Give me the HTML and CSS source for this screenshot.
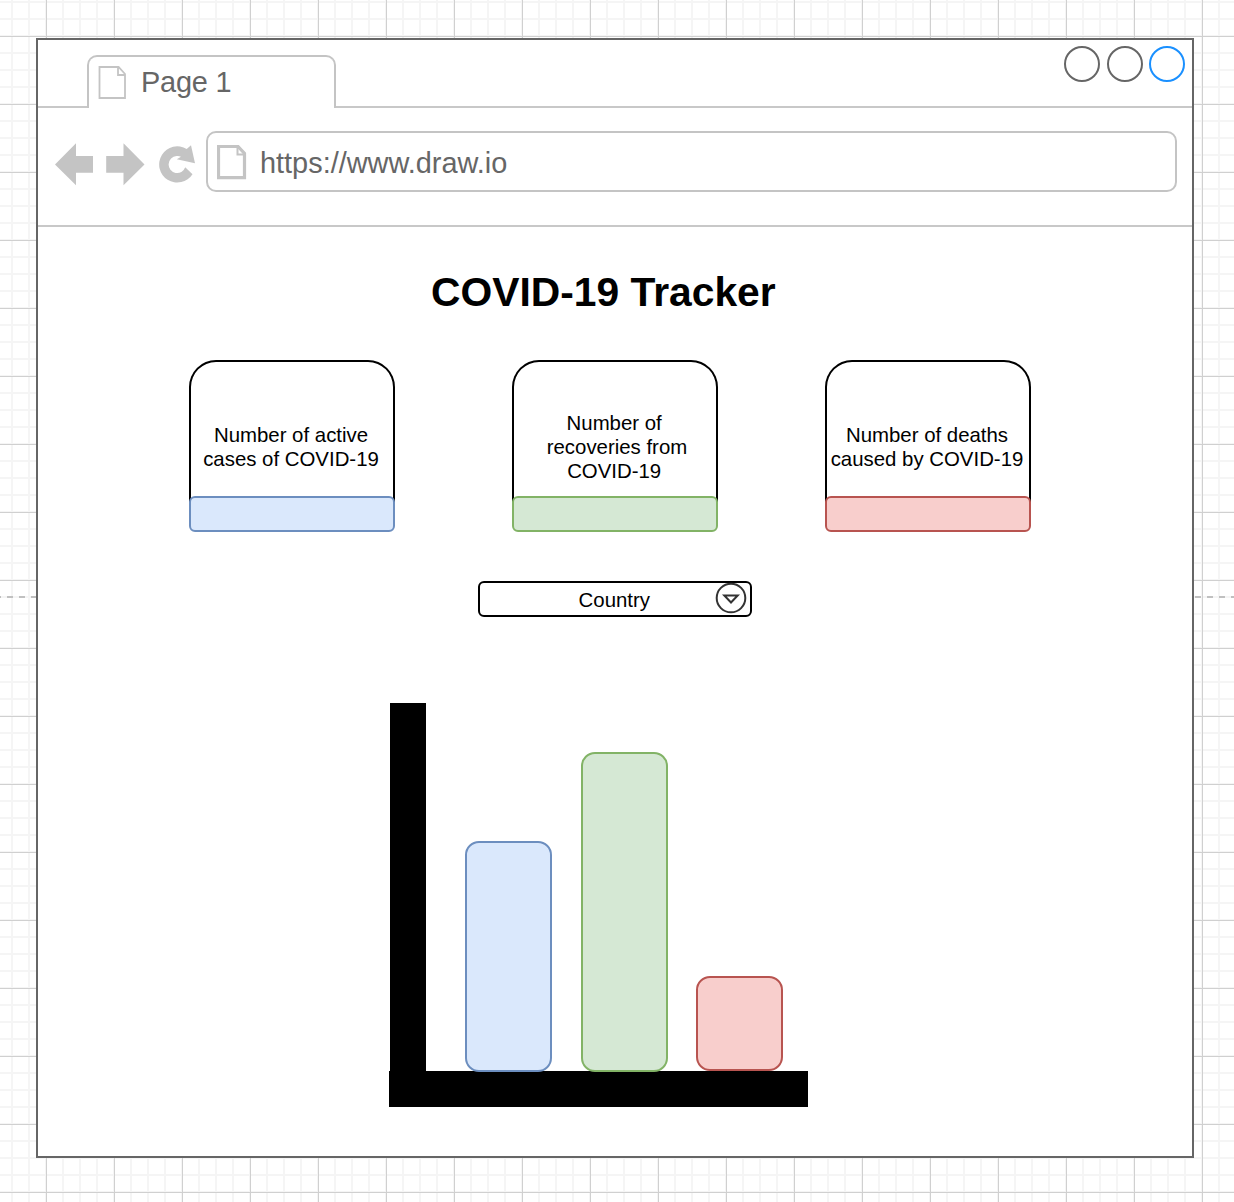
FILE: index.html
```html
<!DOCTYPE html>
<html lang="en">
<head>
<meta charset="utf-8">
<title>COVID-19 Tracker</title>
<link rel="stylesheet" href="styles.css">
</head>
<body>
<div class="window">
  <header class="tabs">
    <div class="tab">
      <svg class="tab-icon" width="28" height="34" viewBox="0 0 28 34"><path d="M1.500 1H20.600L27 8V32H1.500ZM20 1V9H27" /></svg>
      <span>Page 1</span>
    </div>
    <div class="tab-rest">
      <div class="controls"><i></i><i></i><i class="active"></i></div>
    </div>
  </header>
  <nav class="toolbar">
    <svg class="nav-icons" width="144" height="44" viewBox="54 142 144 44">
      <path d="M55 164.500L76 143.200V156H93V172.700H76V185.200Z"/>
      <path d="M144.500 164.500L123.500 143.200V156H106.200V172.700H123.500V185.200Z"/>
      <path d="M191 145.300L195 163.200L176.800 159.300L181 156.800C179.500 156 178 155.900 176.500 156.100A8.500 8.500 0 1 0 185.200 167.300L192.500 174.200A18.100 18.100 0 1 1 186.700 149Z"/>
    </svg>
    <div class="url">
      <svg class="url-icon" width="30" height="35" viewBox="0 0 30 35"><path class="sheet" d="M1.500 1.500H21L27.500 8.500V32.700H1.500Z"/><path class="fold" d="M20.500 2V9.500H27.500"/></svg>
      <span>https://www.draw.io</span>
    </div>
  </nav>
  <main class="page">
    <h1>COVID-19 Tracker</h1>
    <section class="cards">
      <article class="card blue"><p>Number of active<br>cases of COVID-19</p><div class="strip"></div></article>
      <article class="card green"><p>Number of&nbsp;<br>recoveries from<br>COVID-19&nbsp;</p><div class="strip"></div></article>
      <article class="card red"><p>Number of deaths<br>caused by COVID-19</p><div class="strip"></div></article>
    </section>
    <div class="select">
      <span>Country</span>
      <svg width="32" height="32" viewBox="0 0 32 32"><circle cx="16" cy="16" r="14.300"/><path d="M9.300 13.400H22.700L16 20.500Z"/></svg>
    </div>
    <section class="chart">
      <div class="plot">
        <div class="bar blue" style="height:231px"></div>
        <div class="bar green" style="height:320px"></div>
        <div class="bar red" style="height:95px"></div>
      </div>
      <div class="x-axis"></div>
    </section>
  </main>
</div>
</body>
</html>
```
FILE: styles.css
```css
* { box-sizing: border-box; }

body {
  margin: 0;
  height: 1202px;
  padding: 38px 0 0 36px;
  overflow: hidden;
  font-family: "Liberation Sans", Arial, sans-serif;
  color: #000;
  background-color: #fff;
  background-image:
    repeating-linear-gradient(to right, #c0c0c0 0 6px, transparent 6px 12px),
    linear-gradient(to right, #d0d0d0 1px, transparent 1px),
    linear-gradient(to bottom, #d0d0d0 1px, transparent 1px),
    linear-gradient(to right, #f5f5f5 2px, transparent 2px),
    linear-gradient(to bottom, #f5f5f5 2px, transparent 2px);
  background-size: 1239px 2px, 68px 68px, 68px 68px, 17px 17px, 17px 17px;
  background-position: -5px 596px, 46px 0, 0 36px, 11px 0, 0 1px;
  background-repeat: no-repeat, repeat, repeat, repeat, repeat;
}

.window {
  display: flex;
  flex-direction: column;
  width: 1158px;
  height: 1120px;
  border: 2px solid #666;
  background: #fff;
}

.tabs {
  display: flex;
  height: 68px;
}
.tabs::before {
  content: "";
  width: 49px;
  border-bottom: 2px solid #c8c8c8;
}
.tab {
  display: flex;
  width: 249px;
  height: 53px;
  margin-top: 15px;
  padding: 9px 0 0 9px;
  border: 2px solid #c4c4c4;
  border-bottom: 0;
  border-radius: 10px 10px 0 0;
  color: #666;
  font-size: 28.9px;
  line-height: 34px;
}
.tab-icon { margin-right: 15px; }
.tab-icon path {
  fill: none;
  stroke: #c4c4c4;
  stroke-width: 1.8;
}
.tab span {
  margin-top: -1px;
  letter-spacing: -0.2px;
}
.tab-rest {
  display: flex;
  flex: 1;
  justify-content: flex-end;
  padding: 6px 7px 0 0;
  border-bottom: 2px solid #c8c8c8;
}
.controls {
  display: flex;
  gap: 6.500px;
}
.controls i {
  width: 36px;
  height: 36px;
  border: 2px solid #666;
  border-radius: 50%;
}
.controls .active { border-color: #1a90ff; }

.toolbar {
  display: flex;
  height: 119px;
  padding: 23px 15px 0 16px;
  border-bottom: 2px solid #c8c8c8;
}
.nav-icons {
  flex: none;
  margin: 11px 8px 0 0;
  fill: #c4c4c4;
}
.url {
  display: flex;
  flex: 1;
  height: 61px;
  padding: 12px 0 0 9px;
  border: 2px solid #c4c4c4;
  border-radius: 10px;
  color: #666;
  font-size: 28.9px;
  line-height: 36px;
}
.url-icon { margin-right: 13px; }
.url-icon path {
  fill: none;
  stroke: #c4c4c4;
  stroke-width: 3.2;
}
.url-icon .fold { stroke-width: 2; }

.page {
  display: flex;
  flex-direction: column;
  align-items: flex-start;
}
h1 {
  margin: 41px 0 0 393px;
  font-size: 40.8px;
  line-height: 48px;
}

.blue { --fill: #dae8fc; --line: #6c8ebf; }
.green { --fill: #d5e8d4; --line: #82b366; }
.red { --fill: #f8cecc; --line: #b85450; }

.cards {
  display: flex;
  margin: 44px 0 0 151px;
}
.card {
  display: flex;
  flex-direction: column;
  justify-content: flex-end;
  width: 206px;
  height: 172px;
  border-radius: 27px;
  box-shadow: inset 0 0 0 2px #000;
}
.card.green { margin: 0 107px 0 117px; }
.card p {
  height: 136px;
  margin: 0;
  padding: 63px 2px 0 0;
  font-size: 20.4px;
  line-height: 24px;
  text-align: center;
  white-space: nowrap;
}
.card.green p { padding: 51px 0 0 4px; }
.strip {
  height: 36px;
  border: 2px solid var(--line);
  border-radius: 6px;
  background: var(--fill);
}

.select {
  display: flex;
  justify-content: flex-end;
  width: 274px;
  height: 36px;
  margin: 49px 0 0 440px;
  border: 2px solid #000;
  border-radius: 6px;
  font-size: 20.4px;
  line-height: 34px;
}
.select span { margin-right: 65px; }
.select svg {
  flex: none;
  margin: -1px 3px 0 0;
  fill: none;
  stroke: #333;
  stroke-width: 2;
}

.chart {
  width: 419px;
  margin: 86px 0 0 351px;
}
.plot {
  display: flex;
  align-items: flex-end;
  height: 368px;
  margin-left: 1px;
  border-left: 36px solid #000;
}
.bar {
  width: 87px;
  margin-bottom: -1px;
  border: 2px solid var(--line);
  border-radius: 14px;
  background: var(--fill);
  z-index: 1;
}
.bar.blue { margin-left: 39px; }
.bar.green { margin-left: 29px; }
.bar.red { margin: 0 0 0 28px; }
.x-axis {
  height: 36px;
  background: #000;
}
```
